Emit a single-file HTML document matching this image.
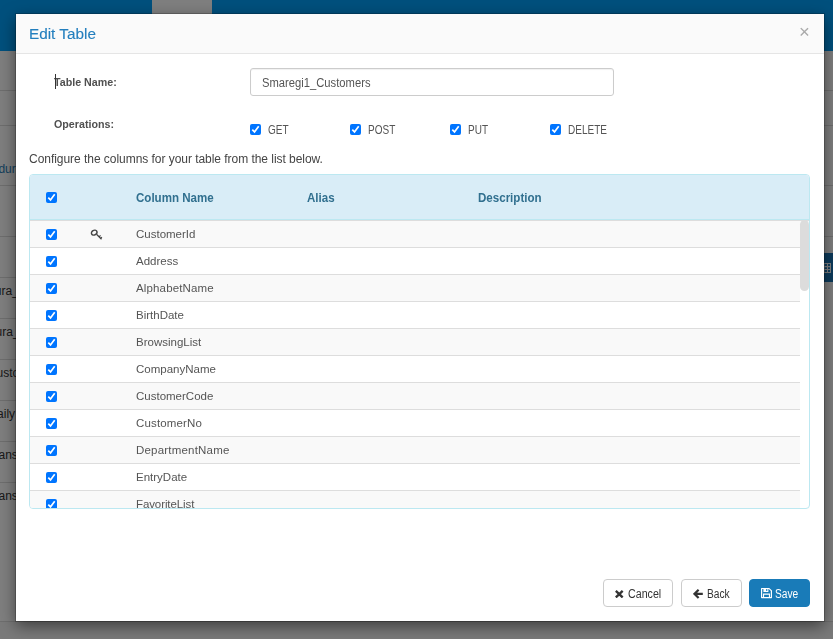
<!DOCTYPE html>
<html lang="en">
<head>
<meta charset="utf-8">
<title>Edit Table</title>
<style>
*{box-sizing:border-box;margin:0;padding:0}
html,body{width:833px;height:639px;overflow:hidden;background:#fff}
body{font-family:"Liberation Sans",sans-serif;font-size:11px;color:#333;position:relative}
/* ---------- background page (behind overlay) ---------- */
#page{position:absolute;left:0;top:0;width:833px;height:639px;background:#fff;overflow:hidden}
#topbar{position:absolute;left:0;top:0;width:833px;height:51px;background:#00a0fa}
#topbar .tab{position:absolute;left:152px;top:0;width:60px;height:14px;background:#fff}
#page .hl{position:absolute;left:0;width:833px;height:1px;background:#ddd}
#page .bt{position:absolute;font-size:12px;color:#333;white-space:nowrap;line-height:14px}
#page .bt.lnk{color:#2a7fb8}
#sidebtn{position:absolute;left:812px;top:253px;width:30px;height:29px;background:#1976b8}
#sidebtn svg{position:absolute;left:8px;top:10px;width:11px;height:10px}
#foot{position:absolute;left:0;top:621px;width:833px;height:18px;background:#f5f5f5;border-top:1px solid #ddd}
#overlay{position:absolute;left:0;top:0;width:833px;height:639px;background:rgba(0,0,0,.5)}
/* ---------- modal ---------- */
#modal{will-change:transform;position:absolute;left:16px;top:14px;width:808px;height:607px;background:#fff;box-shadow:0 0 0 1px rgba(0,0,0,.2),0 5px 15px rgba(0,0,0,.5)}
#mhead{position:absolute;left:0;top:0;width:808px;height:40px;background:#fafafa;border-bottom:1px solid #e5e5e5}
#mhead h4{position:absolute;left:13px;top:10px;font-size:15.3px;line-height:19px;font-weight:normal;color:#237fbe;-webkit-text-stroke:.12px #237fbe;white-space:nowrap}
#mhead .close{position:absolute;left:783px;top:8px;font-size:18.5px;line-height:20px;color:#aaa;font-weight:normal}
.lbl{position:absolute;left:38px;font-weight:bold;font-size:10.7px;line-height:14px;color:#505050;white-space:nowrap}
#caret{position:absolute;left:39px;top:60px;width:1px;height:15px;background:#333}
#tname{position:absolute;left:234px;top:54px;width:364px;height:28px;border:1px solid #ccc;border-radius:3px;background:#fff;font-size:12px;line-height:26px;padding-top:1px;padding-left:11px;color:#555;box-shadow:inset 0 1px 1px rgba(0,0,0,.06);white-space:nowrap}
.cb{position:absolute;width:11px;height:11px;background:#0075ff;border-radius:2px}
.cb svg{position:absolute;left:0;top:0;width:11px;height:11px}
.op{position:absolute;top:108.6px;font-size:12px;line-height:14px;color:#555;white-space:nowrap;transform-origin:0 50%;transform:scaleX(.834)}
#hint{position:absolute;left:13px;top:138px;letter-spacing:-.04px;font-size:12px;line-height:15px;color:#444;white-space:nowrap}
/* panel */
#panel{position:absolute;left:13px;top:160px;width:781px;height:335px;border:1px solid #bce8f1;border-radius:4px;overflow:hidden;background:#fff}
#phead{position:absolute;left:0;top:0;width:779px;height:45px;background:#d9edf7;border-bottom:1px solid #bce8f1}
#pline{position:absolute;left:0;top:45px;width:779px;height:1px;background:#ddd}
#phead span{position:absolute;top:15.5px;font-weight:bold;font-size:12px;line-height:15px;color:#31708f;white-space:nowrap;transform-origin:0 50%;transform:scaleX(.963)}
#rows{position:absolute;left:0;top:46px;width:779px;height:287px;overflow:hidden}
.row{position:absolute;left:0;width:770px;height:27px;border-bottom:1px solid #ddd;background:#fff}
.row.odd{background:#f9f9f9}
.row span{position:absolute;left:106px;top:6px;font-size:11.5px;line-height:15px;color:#555;white-space:nowrap}
.row .cb{left:16px;top:8px}
.row .key{position:absolute;left:59.7px;top:7.7px;width:13px;height:12px}
#sthumb{position:absolute;left:770px;top:45px;width:9px;height:70.5px;background:#dcdcdc;border-radius:5px}
/* footer buttons */
.btn{position:absolute;top:565px;height:28px;border:1px solid #ccc;border-radius:4px;background:#fff;font-size:11.9px;line-height:14px;color:#333;white-space:nowrap}
.btn span{position:absolute;top:7px;font-size:12px;transform-origin:0 50%}
.btn svg{position:absolute}
.btn.primary{background:#197bb8;border-color:#197bb8;color:#fff}
</style>
</head>
<body>
<div id="page">
  <div id="topbar"><div class="tab"></div></div>
  <div class="hl" style="top:90px"></div>
  <div class="hl" style="top:125px"></div>
  <div class="hl" style="top:185px"></div>
  <div class="hl" style="top:236px"></div>
  <div class="hl" style="top:277px;width:812px"></div>
  <div class="hl" style="top:318px;width:812px"></div>
  <div class="hl" style="top:359px;width:812px"></div>
  <div class="hl" style="top:400px;width:812px"></div>
  <div class="hl" style="top:441px;width:812px"></div>
  <div class="hl" style="top:482px;width:812px"></div>
  <div class="bt lnk" style="left:-1.6px;top:161.5px">dur</div>
  <div class="bt" style="left:-5.2px;top:283.7px">ura_</div>
  <div class="bt" style="left:-4.4px;top:324.7px">ura_</div>
  <div class="bt" style="left:-3.4px;top:365.7px">usto</div>
  <div class="bt" style="left:-2.9px;top:406.7px">aily</div>
  <div class="bt" style="left:-1.5px;top:447.7px">ans</div>
  <div class="bt" style="left:-1.5px;top:488.7px">ans</div>
  <div id="foot"></div>
  <div id="sidebtn"><svg viewBox="0 0 11 10"><path d="M.5 .5h10v9H.5zM.5 3.6h10M.5 6.5h10M4 .5v9M7.5 .5v9" fill="none" stroke="#fff" stroke-width="1.1"/></svg></div>
</div>
<div id="overlay"></div>

<div id="modal">
  <div id="mhead">
    <h4>Edit Table</h4>
    <div class="close">×</div>
  </div>

  <div class="lbl" style="top:61px">Table Name:</div>
  <div id="caret"></div>
  <div id="tname"><span style="display:inline-block;transform-origin:0 50%;transform:scaleX(.935)">Smaregi1_Customers</span></div>

  <div class="lbl" style="top:103px">Operations:</div>
  <div class="cb" style="left:234px;top:110px"><svg viewBox="0 0 11 11"><path d="M2.3 5.7l2.2 2.2 4.2-5.6" fill="none" stroke="#fff" stroke-width="1.7" stroke-linejoin="miter"/></svg></div>
  <div class="op" style="left:252px">GET</div>
  <div class="cb" style="left:334px;top:110px"><svg viewBox="0 0 11 11"><path d="M2.3 5.7l2.2 2.2 4.2-5.6" fill="none" stroke="#fff" stroke-width="1.7" stroke-linejoin="miter"/></svg></div>
  <div class="op" style="left:352px">POST</div>
  <div class="cb" style="left:434px;top:110px"><svg viewBox="0 0 11 11"><path d="M2.3 5.7l2.2 2.2 4.2-5.6" fill="none" stroke="#fff" stroke-width="1.7" stroke-linejoin="miter"/></svg></div>
  <div class="op" style="left:452px">PUT</div>
  <div class="cb" style="left:534px;top:110px"><svg viewBox="0 0 11 11"><path d="M2.3 5.7l2.2 2.2 4.2-5.6" fill="none" stroke="#fff" stroke-width="1.7" stroke-linejoin="miter"/></svg></div>
  <div class="op" style="left:552px">DELETE</div>

  <div id="hint">Configure the columns for your table from the list below.</div>

  <div id="panel">
    <div id="phead">
      <div class="cb" style="left:16px;top:17px"><svg viewBox="0 0 11 11"><path d="M2.3 5.7l2.2 2.2 4.2-5.6" fill="none" stroke="#fff" stroke-width="1.7" stroke-linejoin="miter"/></svg></div>
      <span style="left:106px">Column Name</span>
      <span style="left:277px">Alias</span>
      <span style="left:448px">Description</span>
    </div>
    <div id="pline"></div>
    <div id="rows">
      <div class="row odd" style="top:0px"><div class="cb"><svg viewBox="0 0 11 11"><path d="M2.3 5.7l2.2 2.2 4.2-5.6" fill="none" stroke="#fff" stroke-width="1.7" stroke-linejoin="miter"/></svg></div><svg class="key" viewBox="0 0 13 12"><ellipse cx="4.2" cy="3.6" rx="2.9" ry="2.35" transform="rotate(-30 4.2 3.6)" fill="none" stroke="#444" stroke-width="1.4"/><path d="M6.5 5.2l5 5.1" fill="none" stroke="#444" stroke-width="1.3"/><path d="M9.2 7.9l1.3-1.5M10.7 9.4l1.2-1.4" fill="none" stroke="#444" stroke-width="1.15"/></svg><span>CustomerId</span></div>
      <div class="row" style="top:27px"><div class="cb"><svg viewBox="0 0 11 11"><path d="M2.3 5.7l2.2 2.2 4.2-5.6" fill="none" stroke="#fff" stroke-width="1.7" stroke-linejoin="miter"/></svg></div><span>Address</span></div>
      <div class="row odd" style="top:54px"><div class="cb"><svg viewBox="0 0 11 11"><path d="M2.3 5.7l2.2 2.2 4.2-5.6" fill="none" stroke="#fff" stroke-width="1.7" stroke-linejoin="miter"/></svg></div><span style="letter-spacing:.15px">AlphabetName</span></div>
      <div class="row" style="top:81px"><div class="cb"><svg viewBox="0 0 11 11"><path d="M2.3 5.7l2.2 2.2 4.2-5.6" fill="none" stroke="#fff" stroke-width="1.7" stroke-linejoin="miter"/></svg></div><span>BirthDate</span></div>
      <div class="row odd" style="top:108px"><div class="cb"><svg viewBox="0 0 11 11"><path d="M2.3 5.7l2.2 2.2 4.2-5.6" fill="none" stroke="#fff" stroke-width="1.7" stroke-linejoin="miter"/></svg></div><span>BrowsingList</span></div>
      <div class="row" style="top:135px"><div class="cb"><svg viewBox="0 0 11 11"><path d="M2.3 5.7l2.2 2.2 4.2-5.6" fill="none" stroke="#fff" stroke-width="1.7" stroke-linejoin="miter"/></svg></div><span>CompanyName</span></div>
      <div class="row odd" style="top:162px"><div class="cb"><svg viewBox="0 0 11 11"><path d="M2.3 5.7l2.2 2.2 4.2-5.6" fill="none" stroke="#fff" stroke-width="1.7" stroke-linejoin="miter"/></svg></div><span>CustomerCode</span></div>
      <div class="row" style="top:189px"><div class="cb"><svg viewBox="0 0 11 11"><path d="M2.3 5.7l2.2 2.2 4.2-5.6" fill="none" stroke="#fff" stroke-width="1.7" stroke-linejoin="miter"/></svg></div><span style="letter-spacing:.15px">CustomerNo</span></div>
      <div class="row odd" style="top:216px"><div class="cb"><svg viewBox="0 0 11 11"><path d="M2.3 5.7l2.2 2.2 4.2-5.6" fill="none" stroke="#fff" stroke-width="1.7" stroke-linejoin="miter"/></svg></div><span style="letter-spacing:.2px">DepartmentName</span></div>
      <div class="row" style="top:243px"><div class="cb"><svg viewBox="0 0 11 11"><path d="M2.3 5.7l2.2 2.2 4.2-5.6" fill="none" stroke="#fff" stroke-width="1.7" stroke-linejoin="miter"/></svg></div><span>EntryDate</span></div>
      <div class="row odd" style="top:270px"><div class="cb"><svg viewBox="0 0 11 11"><path d="M2.3 5.7l2.2 2.2 4.2-5.6" fill="none" stroke="#fff" stroke-width="1.7" stroke-linejoin="miter"/></svg></div><span style="letter-spacing:-.1px">FavoriteList</span></div>
    </div>
    <div id="sthumb"></div>
  </div>

  <div class="btn" style="left:587px;width:70px"><svg style="left:11.2px;top:10.1px;width:8.5px;height:8.3px" viewBox="0 0 8.2 7.8" preserveAspectRatio="none"><path d="M.8 .8L7.4 7M7.4 .8L.8 7" stroke="#333" stroke-width="2.25" fill="none"/></svg><span style="left:23.8px;transform:scaleX(.89)">Cancel</span></div>
  <div class="btn" style="left:665px;width:61px"><svg style="left:11px;top:9px;width:10px;height:10px" viewBox="0 0 10 10"><path d="M9.8 4.9H2.2M5.6 .8L1.5 4.9l4.1 4.1" stroke="#333" stroke-width="2.2" fill="none"/></svg><span style="left:24.9px;transform:scaleX(.85)">Back</span></div>
  <div class="btn primary" style="left:733px;width:61px"><svg style="left:10.6px;top:8.4px;width:11px;height:10.2px" viewBox="0 0 11 10.2"><path fill-rule="evenodd" fill="#fff" d="M0 .6Q0 0 .6 0H8.2L11 2.6V9.6Q11 10.2 10.4 10.2H.6Q0 10.2 0 9.6ZM1.2 1.1V9.1H2V5.6H9V9.1H9.8V3.1L7.8 1.1H7.4V3.9H2.4V1.1ZM5.2 1.1V3H6.3V1.1ZM3.1 6.7V9.1H7.9V6.7Z"/></svg><span style="left:24.8px;transform:scaleX(.85)">Save</span></div>
</div>
</body>
</html>
